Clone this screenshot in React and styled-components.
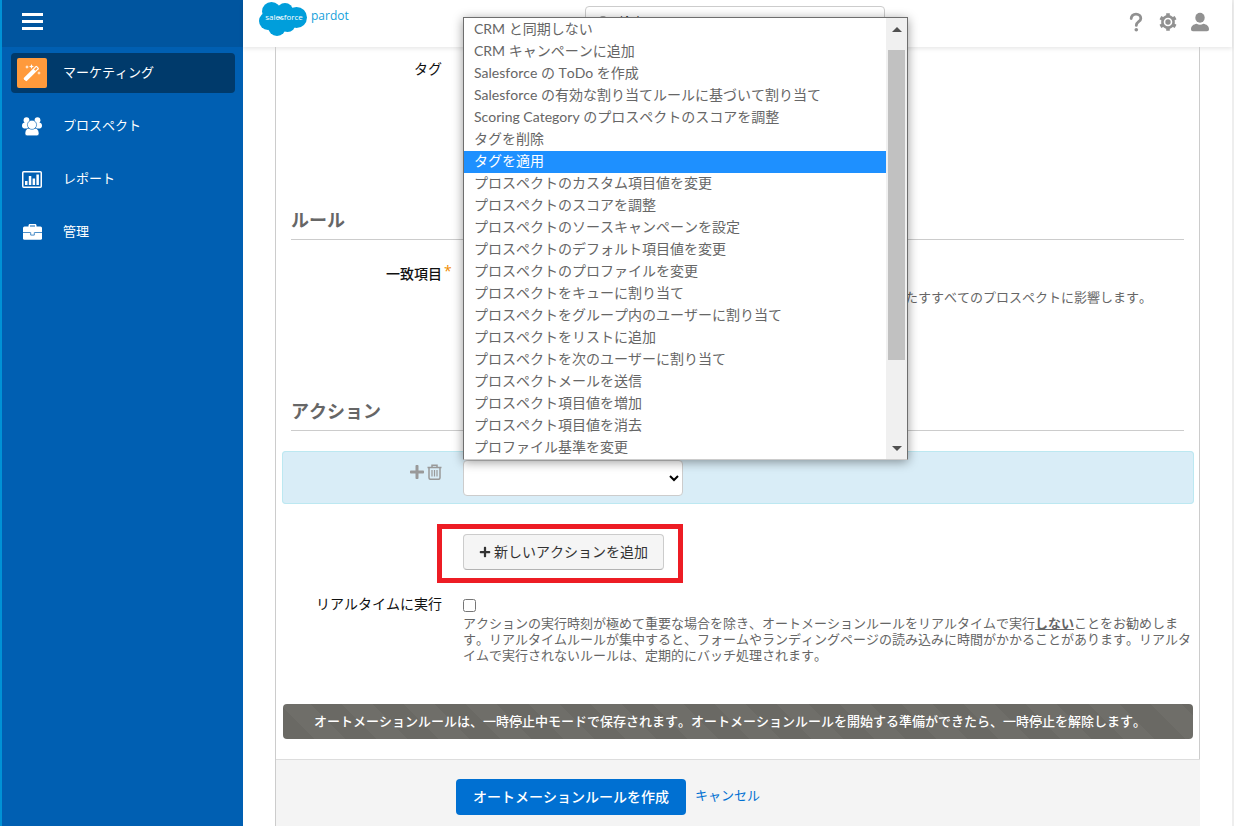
import styled, { createGlobalStyle } from "styled-components"
import { FaPlus } from "react-icons/fa"

const GlobalStyle = createGlobalStyle`
    * {
        box-sizing: border-box;
    }
    body {
        margin: 0;
        background: #fff;
        color: #111;
        font-family: Lato, "Noto Sans CJK JP", sans-serif;
        font-size: 14px;
        font-kerning: none;
        line-height: 20px;
    }
    button, input, select {
        font: inherit;
        font-kerning: none;
    }
`

const Container = styled.div`
    display: flex;
    min-height: 100vh;
    border-right: 2px solid #eee;
`

/* ---- sidebar ---- */

const Sidebar = styled.aside`
    flex: 0 0 243px;
    background: #005fb2;
    border-left: 2px solid #0092d6;
`

const SidebarTop = styled.div`
    height: 47px;
    padding: 11px 18px;
    background: #00559f;
`

const MenuButton = styled.button`
    display: flex;
    flex-direction: column;
    gap: 4px;
    padding: 2px;
    border: 0;
    background: none;
    cursor: pointer;
`

const Bar = styled.span`
    width: 21px;
    height: 3px;
    background: #fff;
`

const Nav = styled.nav`
    display: flex;
    flex-direction: column;
    gap: 13px;
    padding: 6px 8px 6px 9px;
`

const NavItem = styled.a`
    display: flex;
    align-items: center;
    gap: 16px;
    height: 40px;
    padding: 0 6px;
    border-radius: 4px;
    background: ${(props) => (props.$active ? "#003a6b" : "transparent")};
    color: #fff;
    font-size: 13px;
    text-decoration: none;
`

const NavIcon = styled.span`
    display: flex;
    align-items: center;
    justify-content: center;
    width: 30px;
    height: 30px;
    border-radius: 2px;
    background: ${(props) => props.$color || "transparent"};
`

const NavText = styled.span`
    padding-bottom: 2px;
`

/* ---- header ---- */

const Main = styled.div`
    flex: 1;
    min-width: 0;
    display: flex;
    flex-direction: column;
`

const Header = styled.header`
    display: grid;
    grid-template-columns: 1fr 300px 1fr;
    align-items: start;
    height: 47px;
    padding: 0 22px 0 16px;
    box-shadow: 0 2px 4px rgba(0, 0, 0, 0.09);
`

const Logo = styled.a`
    display: flex;
    gap: 4px;
    padding-top: 2px;
    color: #159fdb;
    font-family: "Open Sans", sans-serif;
    font-size: 12px;
    line-height: 28px;
    text-decoration: none;
`

const Search = styled.label`
    display: flex;
    align-items: center;
    gap: 8px;
    height: 32px;
    margin-top: 6px;
    padding: 0 12px;
    border: 1px solid #ccc;
    border-radius: 4px;
    background: #fff;
`

const SearchInput = styled.input`
    flex: 1;
    min-width: 0;
    padding: 0;
    border: 0;
    outline: 0;
    background: none;
    font-size: 13px;
    &::placeholder {
        color: #333;
    }
`

const Tools = styled.div`
    display: flex;
    justify-content: flex-end;
    gap: 12px;
    padding-top: 12px;
`

const ToolButton = styled.button`
    display: flex;
    padding: 0;
    border: 0;
    background: none;
    color: #919191;
    cursor: pointer;
`

/* ---- form ---- */

const Form = styled.form`
    flex: 1;
    display: flex;
    flex-direction: column;
    margin: 0 32px;
    border-left: 1px solid #ccc;
`

const Panel = styled.div`
    padding: 8px 5px 20px 6px;
    border-right: 1px solid #ccc;
`

const Row = styled.div`
    display: flex;
    gap: 21px;
    min-height: ${(props) => props.$minHeight || "36px"};
    margin-bottom: 20px;
`

const LabelCell = styled.div`
    flex: 0 0 160px;
    padding-top: 4px;
    text-align: right;
`

const Label = styled.label`
    position: relative;
    font-weight: ${(props) => (props.$required ? "500" : "400")};
`

const Required = styled.span`
    position: absolute;
    left: 100%;
    top: -4px;
    padding-left: 2px;
    color: #f08c00;
    font-family: "Open Sans", sans-serif;
    font-weight: 400;
`

const Field = styled.div`
    position: relative;
    flex: 1;
    min-width: 0;
`

const Help = styled.p`
    margin: ${(props) => (props.$spaced ? "29px 0 0" : "0")};
    color: #666;
    font-size: 13px;
    line-height: 16px;
`

const SectionTitle = styled.h2`
    margin: 0 10px 20px 9px;
    padding-bottom: 7px;
    border-bottom: 1px solid #ccc;
    color: #666;
    font-size: 18px;
    line-height: 24px;
`

const ActionRow = styled.div`
    display: flex;
    gap: 21px;
    margin-bottom: 30px;
    padding: 9px 0 8px;
    border-radius: 4px;
    background: #d9edf7;
    box-shadow: inset 0 0 0 1px #bce8f1;
`

const ActionTools = styled.div`
    flex: 0 0 160px;
    display: flex;
    justify-content: flex-end;
    align-items: flex-start;
    gap: 2px;
    padding-top: 4px;
`

const IconButton = styled.button`
    display: flex;
    padding: 0;
    border: 0;
    background: none;
    color: #999;
    cursor: pointer;
`

const Select = styled.select`
    display: block;
    width: 220px;
    height: 36px;
    padding: 0 8px 0 4px;
    border: 1px solid #ccc;
    border-radius: 4px;
    background: #fff;
`

const Popup = styled.div`
    position: absolute;
    left: 0;
    bottom: 100%;
    z-index: 10;
    display: flex;
    width: 445px;
    border: 1px solid #6e6e6e;
    border-bottom-color: #ccc;
    background: #fff;
    box-shadow: 0 2px 10px rgba(0, 0, 0, 0.4);
`

const OptionList = styled.ul`
    flex: 1;
    margin: 0;
    padding: 1px 0 0;
    list-style: none;
`

const Option = styled.li`
    padding: 0 10px 2px;
    background: ${(props) => (props.$selected ? "#1e90ff" : "transparent")};
    color: ${(props) => (props.$selected ? "#fff" : "#666")};
    white-space: nowrap;
`

const ScrollBar = styled.div`
    display: flex;
    flex-direction: column;
    justify-content: space-between;
    align-items: center;
    width: 21px;
    padding: 9px 2px 8px;
    background: #f0f0f0;
`

const Thumb = styled.div`
    flex: 0 0 310px;
    width: 17px;
    margin-bottom: 68px;
    background: #c1c1c1;
`

const Arrow = styled.span`
    border: 5px solid transparent;
    border-top: ${(props) => (props.$up ? "0" : "5px solid #505050")};
    border-bottom: ${(props) => (props.$up ? "5px solid #505050" : "0")};
`

const Highlight = styled.div`
    position: relative;
    display: inline-block;
    vertical-align: top;
    &::after {
        content: "";
        position: absolute;
        inset: -10px -19px -13px -26px;
        border: 5px solid #ed1c24;
        pointer-events: none;
    }
`

const AddButton = styled.button`
    display: flex;
    align-items: center;
    gap: 3px;
    height: 36px;
    padding: 0 15px;
    border: 1px solid #ccc;
    border-bottom-color: #b3b3b3;
    border-radius: 4px;
    background: #f5f5f5;
    color: #333;
    cursor: pointer;
`

const Checkbox = styled.input`
    display: block;
    width: 13px;
    height: 13px;
    margin: 9px 0 3px;
`

const Banner = styled.div`
    margin: 41px 1px 0;
    padding: 7px 31px 8px;
    border-radius: 4px;
    background: repeating-linear-gradient(45deg, #6a6964 0 22px, #6f6e69 22px 44px);
    color: #fff;
    font-size: 13px;
    font-weight: 500;
`

const FormFooter = styled.div`
    flex: 1;
    display: flex;
    align-items: flex-start;
    gap: 9px;
    padding: 19px 20px 11px 180px;
    border-top: 1px solid #ddd;
    background: #f4f4f4;
`

const SubmitButton = styled.button`
    height: 36px;
    padding: 0 17px;
    border: 0;
    border-radius: 4px;
    background: #0070d2;
    color: #fff;
    font-weight: 500;
    cursor: pointer;
`

const CancelLink = styled.a`
    padding-top: 6px;
    color: #0070d2;
    font-size: 13px;
    text-decoration: none;
`

/* ---- icons ---- */

const WandIcon = () => (
    <svg width="18" height="18" viewBox="0 0 18 18" fill="#fff">
        <path d="M2.6 16.8 1 15.2a1 1 0 0 1 0-1.4L12.6 2.2a1 1 0 0 1 1.4 0l1.6 1.6a1 1 0 0 1 0 1.4L4 16.8a1 1 0 0 1-1.4 0z" />
        <path d="m11 5.4 2.3-2.3 1.4 1.4L12.4 6.8z" fill="#ff9a3c" />
        <path d="m4 1 .6 1.4L6 3l-1.4.6L4 5l-.6-1.400L2 3l1.400-.6zM8.500 0l.7 1.800L11 2.500l-1.800.7L8.500 5l-.7-1.800L6 2.500l1.800-.7zM16 7l.5 1.500L18 9l-1.500.5L16 11l-.5-1.500L14 9l1.500-.5z" />
    </svg>
)

const PeopleIcon = () => (
    <svg width="20" height="19" viewBox="0 0 20 19" fill="#fff">
        <circle cx="4.5" cy="3.2" r="2.9" />
        <circle cx="15.5" cy="3.2" r="2.9" />
        <path d="M0 8.600C0 6.600 1.400 5.400 3 5.400h3v6H2c-1.300 0-2-1-2-2.800zM20 8.600c0-2-1.400-3.200-3-3.200h-3v6h4c1.300 0 2-1 2-2.800z" />
        <g stroke="#005fb2" strokeWidth="0.6">
            <path d="M5.800 11.300h8.400c1.800 1 2.800 3 2.800 5 0 1.700-1 2.500-2.500 2.500h-9C4 18.800 3 18 3 16.300c0-2 1-4 2.800-5z" />
            <circle cx="10" cy="7.800" r="4.600" />
        </g>
    </svg>
)

const ReportIcon = () => (
    <svg width="20" height="17" viewBox="0 0 20 17" fill="#fff">
        <rect x="0.75" y="0.75" width="18.5" height="15.5" rx="1" fill="none" stroke="#fff" strokeWidth="1.500" />
        <path d="M3 10h2.500v4H3zM6.800 5h2.500v9H6.800zM10.600 7.500h2.500V14h-2.500zM14.400 3.500h2.500V14h-2.500z" />
    </svg>
)

const BriefcaseIcon = () => (
    <svg width="19" height="16" viewBox="0 0 19 16" fill="#fff">
        <path d="M5.500 3V1.500C5.500.6 6 0 7 0h5c1 0 1.500.6 1.500 1.500V3H12V1.500H7V3z" />
        <rect y="2.600" width="19" height="13.200" rx="1.500" />
        <path d="M0 8.500h7.500M11.500 8.500H19M7.700 8.500v2.600h3.600V8.500" fill="none" stroke="#005fb2" strokeWidth="0.7" />
    </svg>
)

const CloudLogo = () => (
    <svg width="48" height="34" viewBox="0 0 48 34" fill="#009edb">
        <circle cx="12.5" cy="9.5" r="9.5" />
        <circle cx="26" cy="9" r="8" />
        <circle cx="37.5" cy="15.5" r="10.5" />
        <circle cx="9" cy="19" r="9" />
        <circle cx="18" cy="25" r="9" />
        <circle cx="28.5" cy="22" r="8" />
        <text x="25" y="18" textAnchor="middle" fill="#fff" fontFamily="Open Sans, sans-serif" fontSize="8">
            salesforce
        </text>
    </svg>
)

const SearchIcon = () => (
    <svg width="13" height="13" viewBox="0 0 13 13" fill="none" stroke="#999" strokeWidth="2">
        <circle cx="5" cy="5" r="4" />
        <path d="m8 8 4 4" />
    </svg>
)

const HelpIcon = () => (
    <svg width="20" height="20" viewBox="0 0 20 20" fill="none" stroke="currentColor">
        <path d="M5.200 6.600C5.200 3.800 7.200 2.200 10 2.200s4.800 1.700 4.800 4.200c0 3.400-4.500 3.300-4.500 7" strokeWidth="2.800" strokeLinecap="round" />
        <circle cx="10.3" cy="17.7" r="1.8" fill="currentColor" stroke="none" />
    </svg>
)

const GearIcon = () => (
    <svg width="20" height="20" viewBox="0 0 20 20" fill="none" stroke="currentColor">
        <circle cx="10" cy="10" r="5.600" strokeWidth="2.600" />
        <circle cx="10" cy="10" r="2.700" fill="currentColor" stroke="none" />
        <path
            d="M10 1.200v3M10 15.800v3M2.400 5.600 5 7.100M15 12.900l2.600 1.500M2.400 14.400 5 12.900M15 7.100l2.600-1.500"
            strokeWidth="3.600"
        />
    </svg>
)

const UserIcon = () => (
    <svg width="20" height="20" viewBox="0 0 20 20" fill="currentColor">
        <ellipse cx="10" cy="5.700" rx="4.700" ry="5" />
        <path d="M1 17c0-3 2.500-4.600 5.600-5.200 2.200 1.200 4.600 1.200 6.800 0C16.500 12.400 19 14 19 17c0 1.500-.7 2.200-2 2.200H3c-1.300 0-2-.7-2-2.200z" />
    </svg>
)

const TrashIcon = () => (
    <svg width="15" height="16" viewBox="0 0 15 16" fill="none" stroke="currentColor">
        <path d="M.5 3.500h14M5 3V1.200h5V3M2 3.500v10.300c0 1 .5 1.500 1.500 1.500h8c1 0 1.500-.5 1.500-1.500V3.500" strokeWidth="1.500" />
        <path d="M5 6v6.500M7.500 6v6.500M10 6v6.500" strokeWidth="1.200" />
    </svg>
)

const navItems = [
    { label: "マーケティング", icon: <WandIcon />, color: "#ff9a3c", active: true },
    { label: "プロスペクト", icon: <PeopleIcon /> },
    { label: "レポート", icon: <ReportIcon /> },
    { label: "管理", icon: <BriefcaseIcon /> },
]

const actions = [
    "CRM と同期しない",
    "CRM キャンペーンに追加",
    "Salesforce の ToDo を作成",
    "Salesforce の有効な割り当てルールに基づいて割り当て",
    "Scoring Category のプロスペクトのスコアを調整",
    "タグを削除",
    "タグを適用",
    "プロスペクトのカスタム項目値を変更",
    "プロスペクトのスコアを調整",
    "プロスペクトのソースキャンペーンを設定",
    "プロスペクトのデフォルト項目値を変更",
    "プロスペクトのプロファイルを変更",
    "プロスペクトをキューに割り当て",
    "プロスペクトをグループ内のユーザーに割り当て",
    "プロスペクトをリストに追加",
    "プロスペクトを次のユーザーに割り当て",
    "プロスペクトメールを送信",
    "プロスペクト項目値を増加",
    "プロスペクト項目値を消去",
    "プロファイル基準を変更",
]

const App = () => {
    return (
        <Container lang="ja">
            <GlobalStyle />
            <Sidebar>
                <SidebarTop>
                    <MenuButton aria-label="メニュー">
                        <Bar />
                        <Bar />
                        <Bar />
                    </MenuButton>
                </SidebarTop>
                <Nav>
                    {navItems.map((item) => (
                        <NavItem href="#" key={item.label} $active={item.active}>
                            <NavIcon $color={item.color}>{item.icon}</NavIcon>
                            <NavText>{item.label}</NavText>
                        </NavItem>
                    ))}
                </Nav>
            </Sidebar>
            <Main>
                <Header>
                    <Logo href="#">
                        <CloudLogo />
                        pardot
                    </Logo>
                    <Search>
                        <SearchIcon />
                        <SearchInput type="search" placeholder="検索" aria-label="検索" />
                    </Search>
                    <Tools>
                        <ToolButton aria-label="ヘルプ"><HelpIcon /></ToolButton>
                        <ToolButton aria-label="設定"><GearIcon /></ToolButton>
                        <ToolButton aria-label="ユーザー"><UserIcon /></ToolButton>
                    </Tools>
                </Header>
                <Form onSubmit={(e) => e.preventDefault()}>
                    <Panel>
                        <Row $minHeight="133px">
                            <LabelCell><Label as="span">タグ</Label></LabelCell>
                        </Row>
                        <SectionTitle>ルール</SectionTitle>
                        <Row $minHeight="119px">
                            <LabelCell>
                                <Label as="span" $required>
                                    一致項目<Required>*</Required>
                                </Label>
                            </LabelCell>
                            <Field>
                                <Help $spaced>
                                    このルールは、作成より前に登録されたものも含めて、以下に示す条件を満たすすべてのプロスペクトに影響します。
                                </Help>
                            </Field>
                        </Row>
                        <SectionTitle>アクション</SectionTitle>
                        <ActionRow>
                            <ActionTools>
                                <IconButton type="button" aria-label="追加"><FaPlus size={16} /></IconButton>
                                <IconButton type="button" aria-label="削除"><TrashIcon /></IconButton>
                            </ActionTools>
                            <Field>
                                <Popup>
                                    <OptionList role="listbox" aria-label="アクション">
                                        {actions.map((action) => (
                                            <Option
                                                key={action}
                                                role="option"
                                                aria-selected={action === "タグを適用"}
                                                $selected={action === "タグを適用"}
                                            >
                                                {action}
                                            </Option>
                                        ))}
                                    </OptionList>
                                    <ScrollBar>
                                        <Arrow $up />
                                        <Thumb />
                                        <Arrow />
                                    </ScrollBar>
                                </Popup>
                                <Select aria-label="アクションを選択" defaultValue="">
                                    <option value=""></option>
                                    {actions.map((action) => (
                                        <option key={action}>{action}</option>
                                    ))}
                                </Select>
                            </Field>
                        </ActionRow>
                        <Row>
                            <LabelCell />
                            <Field>
                                <Highlight>
                                    <AddButton type="button">
                                        <FaPlus size={12} />
                                        新しいアクションを追加
                                    </AddButton>
                                </Highlight>
                            </Field>
                        </Row>
                        <Row>
                            <LabelCell><Label htmlFor="realtime">リアルタイムに実行</Label></LabelCell>
                            <Field>
                                <Checkbox type="checkbox" id="realtime" />
                                <Help>
                                    アクションの実行時刻が極めて重要な場合を除き、オートメーションルールをリアルタイムで実行<b><u>しない</u></b>ことをお勧めします。リアルタイムルールが集中すると、フォームやランディングページの読み込みに時間がかかることがあります。リアルタイムで実行されないルールは、定期的にバッチ処理されます。
                                </Help>
                            </Field>
                        </Row>
                        <Banner>
                            オートメーションルールは、一時停止中モードで保存されます。オートメーションルールを開始する準備ができたら、一時停止を解除します。
                        </Banner>
                    </Panel>
                    <FormFooter>
                        <SubmitButton type="submit">オートメーションルールを作成</SubmitButton>
                        <CancelLink href="#">キャンセル</CancelLink>
                    </FormFooter>
                </Form>
            </Main>
        </Container>
    )
}

export default App
